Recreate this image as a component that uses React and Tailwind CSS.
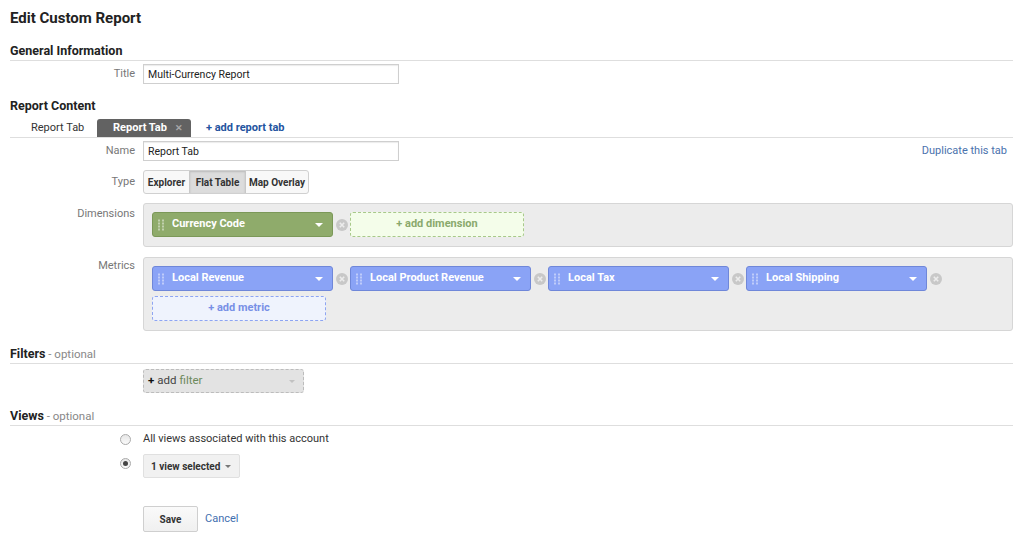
import React from "react";

const Handle = () => (
  <svg width="6" height="12" viewBox="0 0 6 12" className="shrink-0">
    {[0, 1, 2, 3].map((r) => (
      <g key={r}>
        <rect x="0" y={r * 3 + 0.5} width="2" height="2" fill="rgba(255,255,255,0.45)" />
        <rect x="4" y={r * 3 + 0.5} width="2" height="2" fill="rgba(255,255,255,0.45)" />
      </g>
    ))}
  </svg>
);

const Caret = ({ color = "#fff", size = 8 }) => (
  <svg width={size} height={size / 2} viewBox="0 0 8 4" className="shrink-0">
    <path d="M0 0 L8 0 L4 4 Z" fill={color} />
  </svg>
);

const XCircle = () => (
  <svg width="12" height="12" viewBox="0 0 12 12" className="shrink-0">
    <circle cx="6" cy="6" r="6" fill="#c8c8c8" />
    <path d="M3.8 3.8 L8.2 8.2 M8.2 3.8 L3.8 8.2" stroke="#ececec" strokeWidth="1.6" />
  </svg>
);

const Chip = ({ label, kind }) => {
  const cls =
    kind === "green"
      ? "bg-[#8fab6b] border-[#7b9858]"
      : "bg-[#8aa3f6] border-[#6f87d9]";
  return (
    <div className="flex items-center">
      <div
        className={`w-[181px] h-[25px] border rounded-[3px] flex items-center pl-[5px] pr-[9px] ${cls}`}
      >
        <Handle />
        <span className="ml-[8px] text-white font-bold text-[11px] flex-1 truncate">{label}</span>
        <Caret />
      </div>
      <div className="w-[17px] flex justify-center">
        <XCircle />
      </div>
    </div>
  );
};

const SectionHeading = ({ title, optional, className = "" }) => (
  <div className={`h-[21px] leading-[20px] border-b border-[#dedede] ${className}`}>
    <span className="text-[12.5px] font-bold text-[#222]">{title}</span>
    {optional && <span className="text-[11.5px] text-[#888]"> - optional</span>}
  </div>
);

const Label = ({ children, className = "" }) => (
  <div className={`w-[125px] shrink-0 text-right text-[11px] text-[#777] ${className}`}>{children}</div>
);

const Radio = ({ checked }) => (
  <div className="w-[11px] h-[11px] rounded-full border border-[#aaa] bg-gradient-to-b from-[#e6e6e6] to-[#fafafa] flex items-center justify-center">
    {checked && <div className="w-[5px] h-[5px] rounded-full bg-[#444]" />}
  </div>
);

export default function App() {
  return (
    <div
      className="w-[1024px] h-[542px] bg-white pl-[10px] pr-[11px] text-[#222] overflow-hidden"
      style={{ fontFamily: "Roboto, 'Liberation Sans', sans-serif" }}
    >
      <h1 className="mt-[7px] h-[22px] leading-[22px] text-[15px] font-bold text-[#222]">Edit Custom Report</h1>

      <SectionHeading title="General Information" className="mt-[11px]" />

      <div className="flex items-center mt-[3px]">
        <Label>Title</Label>
        <input
          readOnly
          value="Multi-Currency Report"
          className="ml-[8px] w-[256px] h-[20px] border border-[#cfcfcf] shadow-[inset_0_1px_1px_rgba(0,0,0,0.08)] px-[4px] text-[10.5px] text-[#222] outline-none"
        />
      </div>

      <div className="mt-[12px] h-[20px] leading-[20px] text-[12.5px] font-bold text-[#222]">Report Content</div>

      <div className="mt-[3px] h-[19px] flex items-end border-b border-[#dedede]">
        <div className="w-[87px] h-[18px] leading-[18px] pl-[21px] text-[11px] text-[#333]">Report Tab</div>
        <div className="w-[94px] h-[18px] leading-[18px] pl-[16px] bg-[#626262] rounded-t-[3px] flex items-center text-[11px] font-bold text-white">
          Report Tab
          <span className="ml-[8px] text-[#a8a8a8] text-[9px] font-bold">✕</span>
        </div>
        <div className="ml-[15px] h-[18px] leading-[18px] text-[11px] font-bold text-[#2454a0]">+ add report tab</div>
      </div>

      <div className="flex items-center mt-[3px]">
        <Label>Name</Label>
        <input
          readOnly
          value="Report Tab"
          className="ml-[8px] w-[256px] h-[20px] border border-[#cfcfcf] shadow-[inset_0_1px_1px_rgba(0,0,0,0.08)] px-[4px] text-[10.5px] text-[#222] outline-none"
        />
        <div className="flex-1" />
        <div className="mr-[6px] text-[11px] text-[#4a72ad]">Duplicate this tab</div>
      </div>

      <div className="flex items-center mt-[9px]">
        <Label>Type</Label>
        <div className="ml-[8px] h-[24px] flex border border-[#d0d0d0] rounded-[3px] overflow-hidden text-[10px] font-bold text-[#333] bg-[#f8f8f8]">
          <div className="w-[45px] flex items-center justify-center">Explorer</div>
          <div className="w-[57px] flex items-center justify-center bg-[#dcdcdc] border-x border-[#c8c8c8] shadow-[inset_0_1px_2px_rgba(0,0,0,0.15)]">
            Flat Table
          </div>
          <div className="w-[62px] flex items-center justify-center">Map Overlay</div>
        </div>
      </div>

      <div className="flex items-start mt-[9px]">
        <Label className="pt-[3px]">Dimensions</Label>
        <div className="ml-[8px] flex-1 h-[44px] bg-[#ececec] border border-[#d6d6d6] rounded-[3px] pt-[8px] pl-[8px] flex items-start">
          <Chip label="Currency Code" kind="green" />
          <div className="w-[174px] h-[25px] border border-dashed border-[#a8c98a] rounded-[3px] bg-[#f4fdea] flex items-center justify-center text-[11px] font-bold text-[#8aa96d]">
            + add dimension
          </div>
        </div>
      </div>

      <div className="flex items-start mt-[10px]">
        <Label className="pt-[1px]">Metrics</Label>
        <div className="ml-[8px] flex-1 h-[74px] bg-[#ececec] border border-[#d6d6d6] rounded-[3px] pt-[8px] pl-[8px]">
          <div className="flex">
            <Chip label="Local Revenue" />
            <Chip label="Local Product Revenue" />
            <Chip label="Local Tax" />
            <Chip label="Local Shipping" />
          </div>
          <div className="mt-[5px] w-[174px] h-[25px] border border-dashed border-[#8ea5f2] rounded-[3px] bg-[#eff3fd] flex items-center justify-center text-[11px] font-bold text-[#7890e6]">
            + add metric
          </div>
        </div>
      </div>

      <SectionHeading title="Filters" optional className="mt-[12px]" />

      <div className="flex mt-[5px]">
        <div className="w-[133px] shrink-0" />
        <div className="w-[161px] h-[24px] bg-[#e3e3e3] border border-dashed border-[#bcbcbc] rounded-[3px] flex items-center pl-[4px] pr-[8px] text-[11.5px]">
          <span className="font-bold text-[#111]">+</span>
          <span className="ml-[3px] text-[#444]">add</span>
          <span className="ml-[3px] text-[#6d8a5b]">filter</span>
          <div className="flex-1" />
          <Caret color="#c2c2c2" size={6} />
        </div>
      </div>

      <SectionHeading title="Views" optional className="mt-[12px]" />

      <div className="flex items-center mt-[5px] h-[16px]">
        <div className="w-[110px] shrink-0" />
        <Radio />
        <div className="ml-[12px] text-[11px] text-[#333]">All views associated with this account</div>
      </div>

      <div className="flex items-start mt-[7px]">
        <div className="w-[110px] shrink-0" />
        <div className="mt-[4px]">
          <Radio checked />
        </div>
        <div className="ml-[12px] w-[97px] h-[24px] bg-[#f1f1f1] border border-[#e0e0e0] rounded-[2px] flex items-center pl-[7px] pr-[8px] text-[10px] font-bold text-[#333]">
          1 view selected
          <div className="flex-1" />
          <Caret color="#777" size={6} />
        </div>
      </div>

      <div className="flex items-center mt-[28px]">
        <div className="w-[133px] shrink-0" />
        <div className="w-[55px] h-[26px] border border-[#cfcfcf] rounded-[2px] bg-gradient-to-b from-[#fafafa] to-[#f0f0f0] flex items-center justify-center text-[10px] font-bold text-[#333]">
          Save
        </div>
        <div className="ml-[7px] text-[11px] text-[#3f6fb0]">Cancel</div>
      </div>
    </div>
  );
}
